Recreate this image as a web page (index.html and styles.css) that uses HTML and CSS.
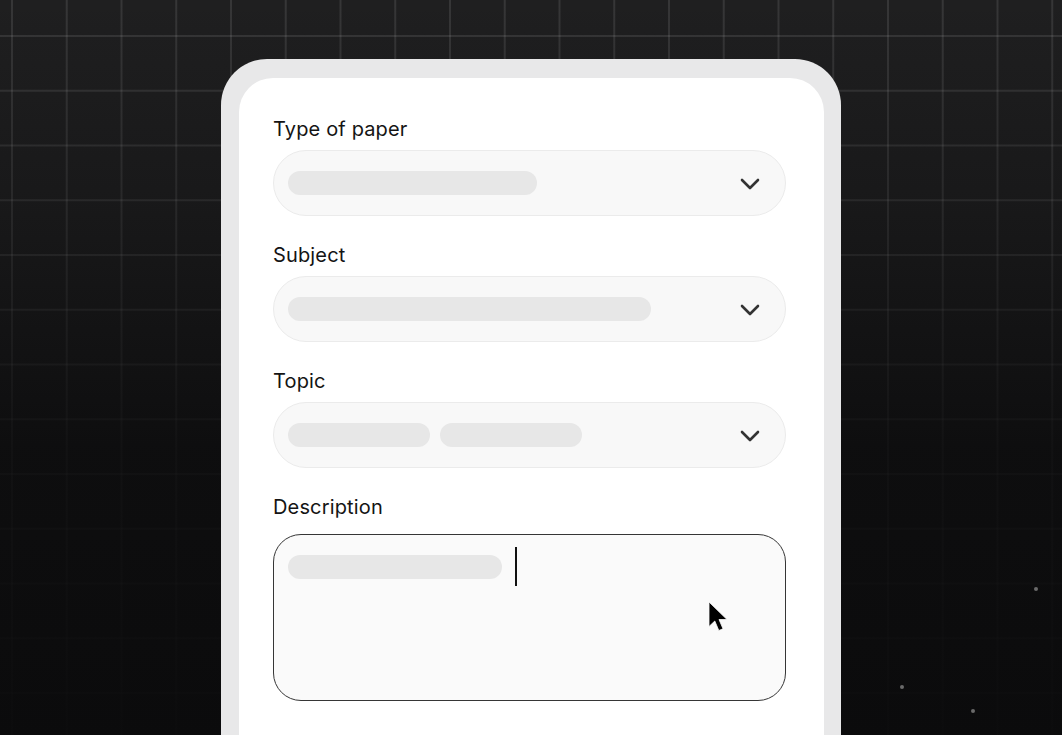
FILE: index.html
```html
<!DOCTYPE html>
<html lang="en">
<head>
<meta charset="utf-8">
<title>Order form</title>
<link rel="stylesheet" href="styles.css">
</head>
<body>
  <div class="dots">
    <span class="dot dot-a"></span>
    <span class="dot dot-b"></span>
    <span class="dot dot-c"></span>
  </div>
  <main class="frame">
    <div class="card">
      <div class="field">
        <label class="label">Type of paper</label>
        <div class="select">
          <div class="chips"><span class="bar" style="width:249px"></span></div>
          <svg class="chev" width="20" height="12" viewBox="0 0 20 12"><path d="M2 2 L10 10 L18 2" fill="none" stroke="#333" stroke-width="2.6" stroke-linecap="round" stroke-linejoin="round"/></svg>
        </div>
      </div>
      <div class="field">
        <label class="label">Subject</label>
        <div class="select">
          <div class="chips"><span class="bar" style="width:363px"></span></div>
          <svg class="chev" width="20" height="12" viewBox="0 0 20 12"><path d="M2 2 L10 10 L18 2" fill="none" stroke="#333" stroke-width="2.6" stroke-linecap="round" stroke-linejoin="round"/></svg>
        </div>
      </div>
      <div class="field">
        <label class="label">Topic</label>
        <div class="select">
          <div class="chips"><span class="bar" style="width:142px"></span><span class="bar" style="width:142px"></span></div>
          <svg class="chev" width="20" height="12" viewBox="0 0 20 12"><path d="M2 2 L10 10 L18 2" fill="none" stroke="#333" stroke-width="2.6" stroke-linecap="round" stroke-linejoin="round"/></svg>
        </div>
      </div>
      <div class="field">
        <label class="label">Description</label>
        <div class="textarea">
          <div class="text-line"><span class="bar" style="width:214px"></span><span class="caret"></span></div>
          <svg class="pointer" width="21" height="31" viewBox="0 0 21 31"><path d="M1 1 L1 25.5 L6.8 20 L10.8 29.5 L15 27.8 L11 18.5 L19 18.5 Z" fill="#000" stroke="#fafafa" stroke-width="0.8" stroke-linejoin="round"/></svg>
        </div>
      </div>
    </div>
  </main>
</body>
</html>
```

FILE: styles.css
```css
* { box-sizing: border-box; }

html, body {
  margin: 0;
  height: 100%;
}

body {
  position: relative;
  overflow: hidden;
  font-family: "Inter", "Liberation Sans", sans-serif;
  color: #141414;
  padding: 59px 0 0 221px;
  background-color: #1f1f20;
  background-image:
    linear-gradient(to bottom, rgba(10, 10, 11, 0) 0px, rgba(10, 10, 11, 0.3) 200px, rgba(10, 10, 11, 0.82) 450px, rgba(10, 10, 11, 0.95) 735px),
    linear-gradient(to right, rgba(255, 255, 255, 0.1) 2px, transparent 2px),
    linear-gradient(to bottom, rgba(255, 255, 255, 0.1) 2px, transparent 2px);
  background-size: 100% 100%, 54.75px 54.75px, 54.75px 54.75px;
  background-position: 0 0, 11px 35px, 11px 35px;
}

.dots .dot {
  position: absolute;
  width: 4px;
  height: 4px;
  border-radius: 50%;
  background: #6a6a6a;
}
.dot-a { left: 1034px; top: 587px; }
.dot-b { left: 900px; top: 685px; width: 3px; height: 3px; background: #4a4a4a; }
.dot-c { left: 971px; top: 709px; width: 3px; height: 3px; background: #555; }

.frame {
  width: 620px;
  height: 760px;
  background: #e8e8e9;
  border-radius: 46px 46px 0 0;
  padding: 19px 17px 0 18px;
}

.card {
  height: 100%;
  background: #ffffff;
  border-radius: 34px 34px 0 0;
  padding: 39px 38px 0 34px;
  display: flex;
  flex-direction: column;
  gap: 27px;
}

.field {
  display: flex;
  flex-direction: column;
}

.label {
  font-size: 20px;
  line-height: 24px;
  font-weight: 400;
  letter-spacing: 0.15px;
  margin-bottom: 9px;
}

.select {
  height: 66px;
  border-radius: 33px;
  background: #f8f8f8;
  border: 1px solid #ebebeb;
  display: flex;
  align-items: center;
  justify-content: space-between;
  padding: 0 25px 0 14px;
}

.chips {
  display: flex;
  gap: 10px;
}

.bar {
  display: block;
  height: 24px;
  border-radius: 12px;
  background: #e7e7e7;
}

.chev { display: block; margin-top: 1px; }

.textarea {
  position: relative;
  margin-top: 6px;
  height: 167px;
  border-radius: 28px;
  border: 1.5px solid #363636;
  background: #fafafa;
  padding: 19.5px 14px;
}

.text-line {
  display: flex;
  align-items: flex-start;
}

.caret {
  display: block;
  width: 2px;
  height: 39px;
  margin-left: 13px;
  margin-top: -8px;
  background: #111;
}

.pointer {
  position: absolute;
  left: 434px;
  top: 66px;
}
```
